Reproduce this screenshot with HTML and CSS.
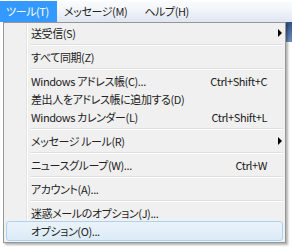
FILE: index.html
```html
<!DOCTYPE html>
<html lang="ja">
<head>
	<meta charset="utf-8" />
	<title>ツール</title>
	<link rel="stylesheet" href="styles.css">
</head>
<body>
	<div class="menubar">
		<span class="menubar-item active">ツール(T)</span>
		<span class="menubar-item">メッセージ(M)</span>
		<span class="menubar-item">ヘルプ(H)</span>
	</div>
	<div class="window-edge"></div>

	<div class="menu">
		<div class="item"><span>送受信(S)</span><span></span><span class="arrow"></span></div>
		<div class="sep"></div>
		<div class="item"><span>すべて同期(Z)</span></div>
		<div class="sep"></div>
		<div class="item"><span>Windows アドレス帳(C)...</span><span class="key">Ctrl+Shift+C</span></div>
		<div class="item"><span>差出人をアドレス帳に追加する(D)</span></div>
		<div class="item"><span>Windows カレンダー(L)</span><span class="key">Ctrl+Shift+L</span></div>
		<div class="sep"></div>
		<div class="item"><span>メッセージ ルール(R)</span><span></span><span class="arrow"></span></div>
		<div class="sep"></div>
		<div class="item"><span>ニュースグループ(W)...</span><span class="key">Ctrl+W</span></div>
		<div class="sep"></div>
		<div class="item"><span>アカウント(A)...</span></div>
		<div class="sep"></div>
		<div class="item"><span>迷惑メールのオプション(J)...</span></div>
		<div class="item selected"><span>オプション(O)...</span></div>
	</div>
</body>
</html>
```

FILE: styles.css
```css
:root {
	--menu-bg: #f0f0f0;
	--menu-border: #979797;
	--text-color: #222;
	--font: "Noto Sans CJK JP", "Liberation Sans", sans-serif;
}

* {
	box-sizing: border-box;
	margin: 0;
	padding: 0;
}

body {
	position: relative;
	width: 292px;
	height: 247px;
	overflow: hidden;
	background-color: #fff;
	color: var(--text-color);
	font-family: var(--font);
	font-size: 11px;
	font-feature-settings: "palt";
	letter-spacing: -0.4px;
}

.menubar {
	display: flex;
	height: 22px;
	border-top: 1px solid #fff;
	background: linear-gradient(#fbfcfe, #f1f4f9 45%, #dfe6f1);
}

.menubar-item {
	display: flex;
	align-items: center;
	padding: 0 10px 0 7px;
	line-height: 21px;
	white-space: nowrap;
}

.menubar-item.active {
	width: 57px;
	padding-left: 6px;
	background-color: #3399ff;
	color: #fff;
}

/* part of the window behind the menu */
.window-edge {
	position: absolute;
	top: 22px;
	right: 0;
	width: 6px;
	height: 20px;
	background: linear-gradient(#2f4f86, #6c8fbf);
}

.menu {
	position: relative;
	width: 283px;
	margin-left: 3px;
	padding: 1px 2px;
	border: 1px solid var(--menu-border);
	background: linear-gradient(to right, transparent 22px, #e2e3e3 22px, #e2e3e3 23px, #fff 23px, #fff 24px, transparent 24px), var(--menu-bg);
	box-shadow: 2px 2px 2px rgba(0, 0, 0, 0.3);
}

.item {
	display: grid;
	grid-template-columns: 1fr auto 15px;
	align-items: center;
	height: 18px;
	padding-left: 24px;
	border: 1px solid transparent;
	border-radius: 3px;
	white-space: nowrap;
}

.arrow {
	justify-self: end;
	width: 0;
	height: 0;
	border-top: 4px solid transparent;
	border-bottom: 4px solid transparent;
	border-left: 4px solid #000;
}

.selected {
	height: 20px;
	margin-top: -1px;
	background: linear-gradient(#eaf3fb, #dcebf7);
	border-color: #a9d3f1;
}

.sep {
	height: 6px;
	margin-left: 24px;
	background: linear-gradient(transparent 2px, #e0e0e0 2px, #e0e0e0 3px, #fff 3px, #fff 4px, transparent 4px);
}
```
